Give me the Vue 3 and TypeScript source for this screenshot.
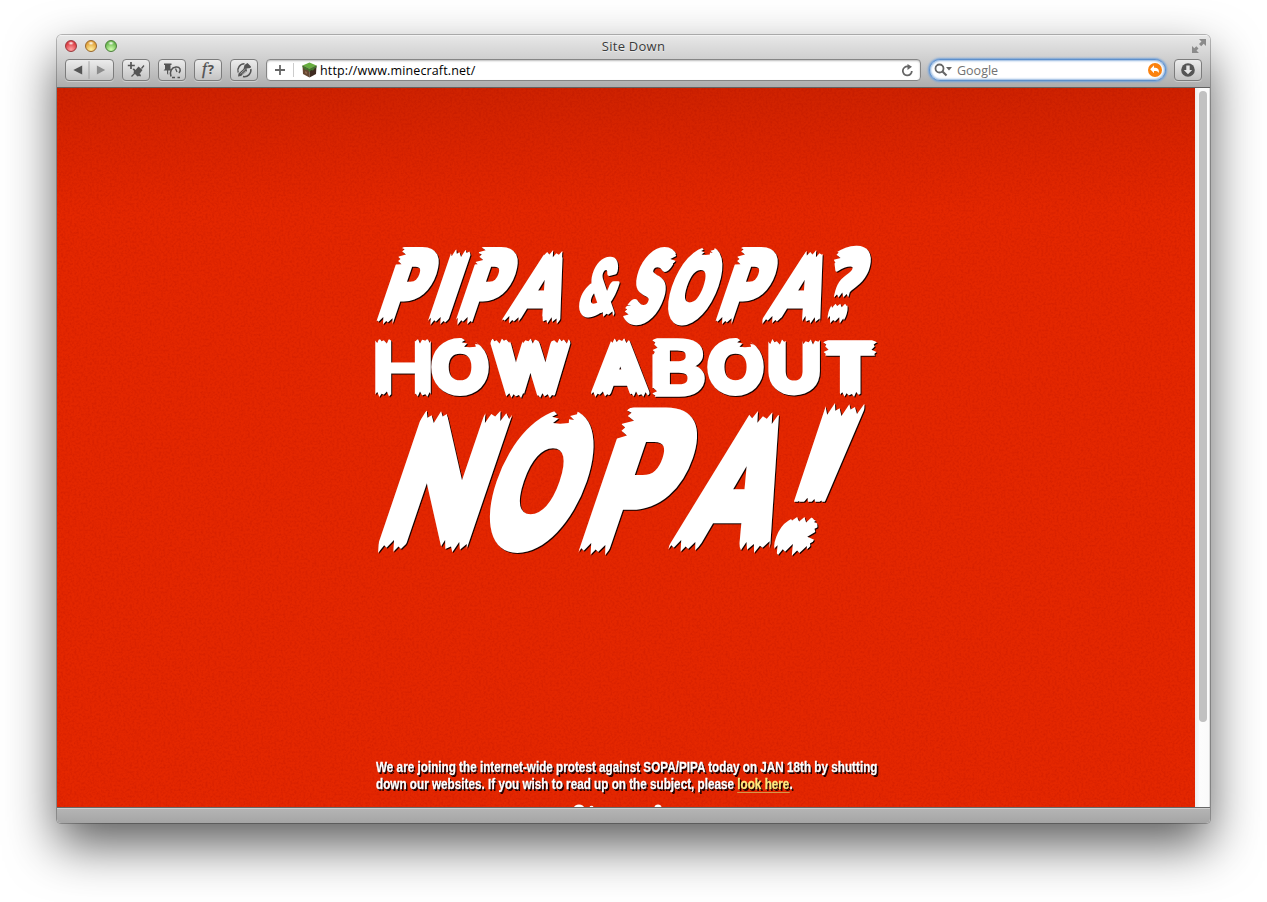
<script setup lang="ts">
type Edge = 'top' | 'bottom' | 'left' | 'right' | 'gap' | 'bite'
type Tear = [Edge, number, number, number?]
interface Glyph { ch: string; x: number; w: number; top: number; base: number; skew: number; stroke: number; font: string; tears: Tear[] }

const ctx = document.createElement('canvas').getContext('2d')!

const stems: Tear[] = [['top', 0, 1], ['bottom', 0, 1]]
const pTears: Tear[] = [['bottom', 0, 0.62], ['left', 0, 0.22]]
const oSlanted: Tear[] = [['bite', 0.38, 0.6, 0.09]]
const oUpright: Tear[] = [['bite', 0.53, 0.8, 0.16]]

const g = (ch: string, x: number, r: number, top: number, base: number, skew: number, stroke: number, tears: Tear[], font = 'Lato'): Glyph =>
  ({ ch, x, w: r - x, top, base, skew, stroke, font, tears })

const lines: Glyph[][] = [
  [
    g('P', 374, 420, 248, 325, 0.34, 8, pTears),
    g('I', 426, 447, 249, 325, 0.34, 4, stems),
    g('P', 453, 499, 248, 325, 0.34, 8, pTears),
    g('A', 500, 560, 250, 324, 0.34, 8, stems),
    g('&', 574, 614, 257, 317, 0.3, 5, [['bottom', 0.6, 1]]),
    g('S', 617, 656, 248, 325, 0.34, 8, [['right', 0.02, 0.25], ['left', 0.74, 0.96]]),
    g('O', 657, 707, 248, 325, 0.34, 10, oSlanted),
    g('P', 713, 759, 248, 325, 0.34, 8, pTears),
    g('A', 760, 820, 250, 324, 0.34, 8, stems),
    g('?', 816, 856, 246, 324, 0.25, 5, [['bottom', 0, 1], ['left', 0, 0.25], ['gap', 0.66, 0.74]], 'Open Sans'),
  ],
  [
    g('H', 375, 431, 338, 397, 0, 3, stems),
    g('O', 431, 489, 338, 396, 0, 7, oUpright),
    g('W', 490, 571, 338, 398, 0, 9, stems),
    g('A', 591, 650, 338, 397, 0, 9, stems),
    g('B', 652, 705, 338, 397, 0, 4, [['left', 0, 0.3], ['left', 0.85, 1]]),
    g('O', 707, 764, 338, 396, 0, 7, oUpright),
    g('U', 768, 820, 339, 396, 0, 6, [['top', 0, 1]]),
    g('T', 823, 877, 340, 397, 0, 8, [['left', 0, 0.37], ['right', 0, 0.37], ['bottom', 0, 1]]),
  ],
  [
    g('N', 373, 467, 410, 553, 0.34, 14, stems),
    g('O', 470, 565, 411, 552, 0.34, 15, oSlanted),
    g('P', 575, 661, 409, 556, 0.34, 12, pTears),
    g('A', 665, 770, 411, 553, 0.34, 14, stems),
    g('!', 768, 810, 403, 557, 0.38, 2, [...stems, ['gap', 0.665, 0.74], ['right', 0.72, 1, 0.8]], 'Open Sans'),
  ],
]

const valleys = [0.55, 0.9, 0.6, 1, 0.5, 0.85, 0.7]
const tips = [0.25, 0, 0.4, 0.1, 0.3, 0.05]

function tearPoints(q: Glyph, t: Tear): string {
  const h = q.base - q.top
  const big = h > 100
  const tooth = big ? 3.7 : 2.4
  const join = (pts: number[][]) => pts.map(v => v.map(n => n.toFixed(1)).join(',')).join(' ')
  if (t[0] === 'bite') {
    const a = t[1] * q.w
    const s = (t[2] - t[1]) * q.w
    const d = (t[3] ?? 0.1) * h
    const shape = [[0, -12], [0, 0], [0.2, 0.25], [0, 0.45], [0.35, 0.6], [0.15, 0.95], [0.5, 1], [0.9, 0.95], [0.85, 0.65], [1.1, 0.7], [0.85, 0.4], [1.15, 0.25], [1.1, -12]]
    return join(shape.map(([px, py]) => [a + px * s, -h + (py < 0 ? py : py * d)]))
  }
  const depth = (big ? 13 : h > 65 ? 8 : 5.5) * (t[3] ?? 1)
  if (t[0] === 'gap') {
    const pts: number[][] = []
    const upper = -h + t[1] * h
    const lower = -h + t[2] * h
    let n = 0
    for (let p = -20; p <= q.w + 20; p += tooth, n++) pts.push([p, upper - (n % 2 ? 0 : valleys[(n / 2) % 7] * depth * 0.7)])
    n = 0
    for (let p = q.w + 20; p >= -20; p -= tooth, n++) pts.push([p, lower + (n % 2 ? 0 : valleys[(n / 2) % 7] * depth * 0.5)])
    return join(pts)
  }
  const along = t[0] === 'top' || t[0] === 'bottom'
  const len = along ? q.w : h
  const a = t[1] * len - (t[1] === 0 ? 3 : 0)
  const b = t[2] * len + (t[2] === 1 ? 3 : 0)
  const raw: [number, number][] = [[a, -12]]
  let i = q.x % 3
  for (let p = a; p <= b; p += tooth * (i % 4 === 1 ? 1.3 : 0.9), i++) {
    raw.push([p, depth * (i % 2 ? tips[((i - 1) / 2) % 6] : valleys[(i / 2) % 7])])
  }
  raw.push([b, -12])
  return join(raw.map(([p, d]) => {
    if (t[0] === 'top') return [p, -h + d]
    if (t[0] === 'bottom') return [p, -d]
    if (t[0] === 'left') return [d, -h + p]
    return [q.w - d, -h + p]
  }))
}

const art = lines.map((line, li) => line.map((q, i) => {
  ctx.font = `900 100px "${q.font}"`
  const m = ctx.measureText(q.ch)
  const sx = (q.w - q.stroke) / (m.actualBoundingBoxLeft + m.actualBoundingBoxRight)
  const sy = (q.base - q.top - q.stroke) / (m.actualBoundingBoxAscent + m.actualBoundingBoxDescent)
  return {
    ...q,
    id: `tear-${li}-${i}`,
    face: q.font === 'Lato' ? 'lato' : 'open',
    outer: `matrix(1 0 ${-q.skew} 1 ${q.x} ${q.base})`,
    inner: `translate(${q.stroke / 2} ${-q.stroke / 2}) scale(${sx} ${sy}) translate(${m.actualBoundingBoxLeft} ${-m.actualBoundingBoxDescent})`,
    cuts: q.tears.map(t => tearPoints(q, t)),
  }
}))
</script>

<template>
  <div class="desktop">
    <div class="window">
      <header class="chrome">
        <div class="titlebar">
          <div class="lights"><i class="red"></i><i class="amber"></i><i class="green"></i></div>
          <span class="title">Site Down</span>
          <svg class="expand" width="14" height="14" viewBox="0 0 14 14"><path d="M7 0h7v7l-2.300-2.300-2.500 2.500-2.200-2.200 2.500-2.500zM0 7l2.300 2.300 2-2 2.200 2.200-2 2 2.500 2.500H0z" fill="#8b8b8b" /></svg>
        </div>
        <div class="toolbar">
          <div class="btn nav">
            <svg width="48" height="20" viewBox="0 0 48 20"><path d="M16.500 5.500v9L7.500 10z" fill="#555" /><path d="M31.500 5.500v9l8.500-4.500z" fill="#8c8c8c" /><path d="M23.500 1v18" stroke="#a2a2a2" /></svg>
          </div>
          <div class="btn">
            <svg width="26" height="20" viewBox="0 0 26 20"><path d="M8 2v7M4.800 5.500h7" stroke="#555" stroke-width="1.700" /><path d="M8.500 16.500l5-5M18.500 8.500l2.500-3" stroke="#555" stroke-width="1.300" /><path d="M9.500 9l1.500-.5 7 6.500-.5 1.500-1.500-.5-1.500.5-4-4 .5-1.500zM12.500 10l3-3.500 4 3.500-3 4z" fill="#555" /></svg>
          </div>
          <div class="btn">
            <svg width="26" height="20" viewBox="0 0 26 20"><path d="M5 3.500h7.500v1.500h-1v4l1 1.500H4.500L6 9V5H5zM8 10.500h1.200v4.500L8 13.500z" fill="#555" /><path d="M12 16.500c-1.800-5 .5-9 5-9.500 4-.3 5.500 3 3 6" fill="none" stroke="#555" stroke-width="1.600" /><path d="M16.500 8.500l1.500 3.500M13 17.500h3M18.500 17.500h2.500" stroke="#555" stroke-width="1.300" /></svg>
          </div>
          <div class="btn fx"><em>f</em><b>?</b></div>
          <div class="btn">
            <svg width="26" height="20" viewBox="0 0 26 20"><g fill="none" stroke="#555" stroke-width="1.500"><path d="M7.200 12.500A6.600 6.600 0 0 1 13.500 3.800" /><path d="M12 16.500A6.500 6.500 0 0 0 19.800 9" /></g><path d="M13.500 5l3-2 3.500 3.500-.5 1.500-4 .5.500 2.500-6 5-3 .5.500-3 5-4.500z" fill="#555" /><path d="M9.500 13.500l5-4.500M11 14.500l4-3.500" stroke="#c8c8c8" stroke-width=".7" /></svg>
          </div>
          <div class="url">
            <svg class="plus" width="12" height="12" viewBox="0 0 12 12"><path d="M6 1v10M1 6h10" stroke="#666" stroke-width="1.800" /></svg>
            <i class="divider"></i>
            <svg class="block" width="15" height="16" viewBox="0 0 15 16"><path d="M7.500.5L14.500 3.500 7.500 7 .5 3.500z" fill="#67ae3f" /><path d="M.5 3.500L7.500 7v8.500L1 12z" fill="#644832" /><path d="M14.500 3.500L7.500 7v8.500L14 12z" fill="#3e2b20" /><path d="M.5 3.500L7.500 7l7-3.500v2l-2 1-1.500 2-2-.5-1.500 2-2-2.500-2 .5L.5 5z" fill="#44752e" /><path d="M3 9l2 1v2l-2-1z" fill="#8c674a" /></svg>
            <span class="address">http://www.minecraft.net/</span>
            <svg class="reload" width="13" height="13" viewBox="0 0 13 13"><path d="M10.800 7A4.500 4.500 0 1 1 7 2.500" fill="none" stroke="#666" stroke-width="1.800" /><path d="M6.500 0l4.500 2.800L6.500 6z" fill="#666" /></svg>
          </div>
          <div class="search">
            <svg width="20" height="14" viewBox="0 0 20 14"><circle cx="5.500" cy="5.500" r="4" fill="none" stroke="#666" stroke-width="1.800" /><path d="M8.500 8.500l4 4" stroke="#666" stroke-width="2.200" /><path d="M12 4h6l-3 3.500z" fill="#666" /></svg>
            <span>Google</span>
            <svg width="14" height="14" viewBox="0 0 14 14"><circle cx="7" cy="7" r="7" fill="#fb820f" /><path d="M6 2.300v2.400c4 0 5.300 1.700 4.800 5.300-.8-1.800-2.300-2-4.800-2v2.200L2.200 6.200z" fill="#fff" /></svg>
          </div>
          <div class="btn dl">
            <svg width="16" height="16" viewBox="0 0 16 16"><circle cx="8" cy="8" r="6.800" fill="#555" /><path d="M6.300 3.500h3.400V8h2.500L8 12.300 3.800 8h2.500z" fill="#e5e5e5" /></svg>
          </div>
        </div>
      </header>

      <div class="viewport">
        <main class="page">
          <svg class="grain" width="1138" height="719">
            <filter id="grain" x="0" y="0" width="100%" height="100%">
              <feTurbulence type="fractalNoise" baseFrequency="0.45" numOctaves="2" seed="4" stitchTiles="stitch" />
              <feColorMatrix values="0 0 0 0 0.3  0 0 0 0 0  0 0 0 0 0  1.400 0 0 0 -0.55" />
            </filter>
            <rect width="1138" height="719" filter="url(#grain)" />
          </svg>
          <svg class="headline" width="524" height="330" viewBox="364 236 524 330" role="img" aria-label="PIPA &amp; SOPA? HOW ABOUT NOPA!">
            <g v-for="(line, li) in art" :key="li" class="line">
              <g v-for="q in line" :key="q.id" :transform="q.outer">
                <mask :id="q.id" maskUnits="userSpaceOnUse" x="-40" y="-180" width="240" height="220">
                  <rect x="-40" y="-180" width="240" height="220" fill="#fff" />
                  <polygon v-for="(c, n) in q.cuts" :key="n" :points="c" fill="#000" />
                </mask>
                <g :mask="`url(#${q.id})`">
                  <text :class="q.face" :transform="q.inner" :stroke-width="q.stroke">{{ q.ch }}</text>
                </g>
              </g>
            </g>
          </svg>
          <p class="notice">
            <span>We are joining the internet-wide protest against SOPA/PIPA today on JAN 18th by shutting</span>
            <span>down our websites. If you wish to read up on the subject, please <a>look here</a>.</span>
          </p>
          <svg class="peek" width="120" height="4" viewBox="0 0 120 4"><g fill="#fff"><ellipse cx="13" cy="4.500" rx="5" ry="3" /><ellipse cx="25.500" cy="4.500" rx="2" ry="1.800" /><ellipse cx="92" cy="4.500" rx="3.500" ry="3" /></g></svg>
        </main>
        <aside class="scroll"><i></i></aside>
      </div>
      <footer class="status"></footer>
    </div>
  </div>
</template>

<style>
body { margin: 0; background: #fff; }
</style>

<style scoped>
.desktop { box-sizing: border-box; width: 1267px; height: 902px; padding: 35px 57px 0; overflow: hidden; background: #fff; }
.window { width: 1153px; height: 788px; border-radius: 5px 5px 4px 4px; overflow: hidden; display: flex; flex-direction: column; box-shadow: 0 0 0 1px rgba(0, 0, 0, .25), 0 22px 50px rgba(0, 0, 0, .64); font-family: "Lucida Grande", "Open Sans", sans-serif; }
.chrome { box-sizing: border-box; height: 53px; background: linear-gradient(#e8e8e8, #cdcdcd 50%, #adadad); border-bottom: 1px solid #626262; box-shadow: inset 0 1px #f3f3f3; }
.titlebar { height: 24px; display: grid; grid-template-columns: 1fr auto 1fr; align-items: center; padding: 0 4px 0 8px; }
.lights { display: flex; gap: 8px; margin-top: -2px; }
.lights i { box-sizing: border-box; width: 12px; height: 12px; border-radius: 50%; border: 1px solid; }
.lights .red { background: radial-gradient(ellipse 3px 2px at 50% 22%, #fff, transparent), radial-gradient(circle at 50% 85%, #ffa3a3, #dd3d43 70%); border-color: #98383c; }
.lights .amber { background: radial-gradient(ellipse 3px 2px at 50% 22%, #fff, transparent), radial-gradient(circle at 50% 85%, #fff0a0, #e2a33a 70%); border-color: #98662a; }
.lights .green { background: radial-gradient(ellipse 3px 2px at 50% 22%, #fff, transparent), radial-gradient(circle at 50% 85%, #d1ffb0, #6bb950 70%); border-color: #4b7f3a; }
.title { font-size: 13px; line-height: 22px; letter-spacing: .25px; margin: -3px 4px 0 0; color: #3a3a3a; text-shadow: 0 1px rgba(255, 255, 255, .5); }
.expand { justify-self: end; margin-top: -2px; }
.toolbar { display: flex; gap: 8px; padding: 0 8px; height: 22px; }
.btn { box-sizing: border-box; width: 28px; height: 22px; border: 1px solid #7c7c7c; border-radius: 4px; background: linear-gradient(#ececec, #c3c3c3); box-shadow: 0 1px rgba(255, 255, 255, .35); display: flex; align-items: center; justify-content: center; flex: none; }
.nav { width: 49px; }
.fx { font: italic 17px/18px "Liberation Serif", serif; color: #505050; gap: 1px; padding-bottom: 2px; -webkit-text-stroke: .3px #505050; }
.fx b { font: bold 13px/18px "Open Sans", sans-serif; -webkit-text-stroke: 0; }
.dl { margin-left: -1px; }
.url { box-sizing: border-box; width: 655px; height: 22px; border: 1px solid #858585; border-radius: 4px; background: #fff; box-shadow: inset 0 1px 2px #bbb; display: flex; align-items: center; padding: 0 6px 0 7px; }
.divider { width: 1px; height: 14px; background: #ccc; margin: 0 8px 0 7px; }
.block { margin-right: 3px; }
.address { font-size: 12.500px; letter-spacing: .13px; line-height: 20px; color: #000; flex: 1; white-space: nowrap; padding-top: 1px; }
.search { box-sizing: border-box; width: 237px; height: 22px; border: 1px solid #5d8fcb; border-radius: 11px; background: #fff; box-shadow: 0 0 2px 1px #75a3da, inset 0 0 2px 1px #91b5df; display: flex; align-items: center; padding: 0 3px 0 4px; gap: 3px; margin-right: 1px; }
.search span { flex: 1; font-size: 12.500px; line-height: 20px; color: #727272; padding-top: 1px; }
.viewport { display: flex; height: 719px; flex: none; }
.page { width: 1138px; height: 719px; overflow: hidden; position: relative; display: flex; flex-direction: column; align-items: center; background: linear-gradient(#ce2200, #d82400 50px, #e42700 125px, #e42700); }
.grain { position: absolute; inset: 0; opacity: .25; pointer-events: none; }
.headline { position: relative; flex: none; margin-top: 148px; overflow: visible; }
.line { filter: drop-shadow(1.500px 1.500px 0 #150300); }
.headline text { font-weight: 900; font-size: 100px; fill: #fff; stroke: #fff; stroke-linejoin: round; vector-effect: non-scaling-stroke; }
.headline .lato { font-family: Lato, sans-serif; }
.headline .open { font-family: "Open Sans", sans-serif; }
.notice { position: relative; flex: none; width: 501px; margin: 193px 0 0; font: bold 14.500px/17px "Liberation Sans", sans-serif; color: #fff; text-shadow: 1px 1px #200, 2px 2px #200; }
.notice span { display: block; white-space: nowrap; width: max-content; transform: scaleX(.808); transform-origin: 0 0; -webkit-text-stroke: .3px; }
.notice a { color: #ffe87e; border-bottom: 1px solid #d79646; }
.peek { position: relative; flex: none; margin-top: 10px; }
.scroll { box-sizing: border-box; width: 15px; background: linear-gradient(90deg, #ededed, #fcfcfc 35%, #fafafa); border-right: 1px solid #ddd; padding: 3px 0 0 4px; }
.scroll i { display: block; width: 8px; height: 631px; border-radius: 4px; background: #c1c1c1; }
.status { box-sizing: border-box; height: 16px; background: linear-gradient(#b5b5b5, #a5a5a5); border-top: 1px solid #686868; box-shadow: inset 0 1px #cfcfcf; }
</style>
